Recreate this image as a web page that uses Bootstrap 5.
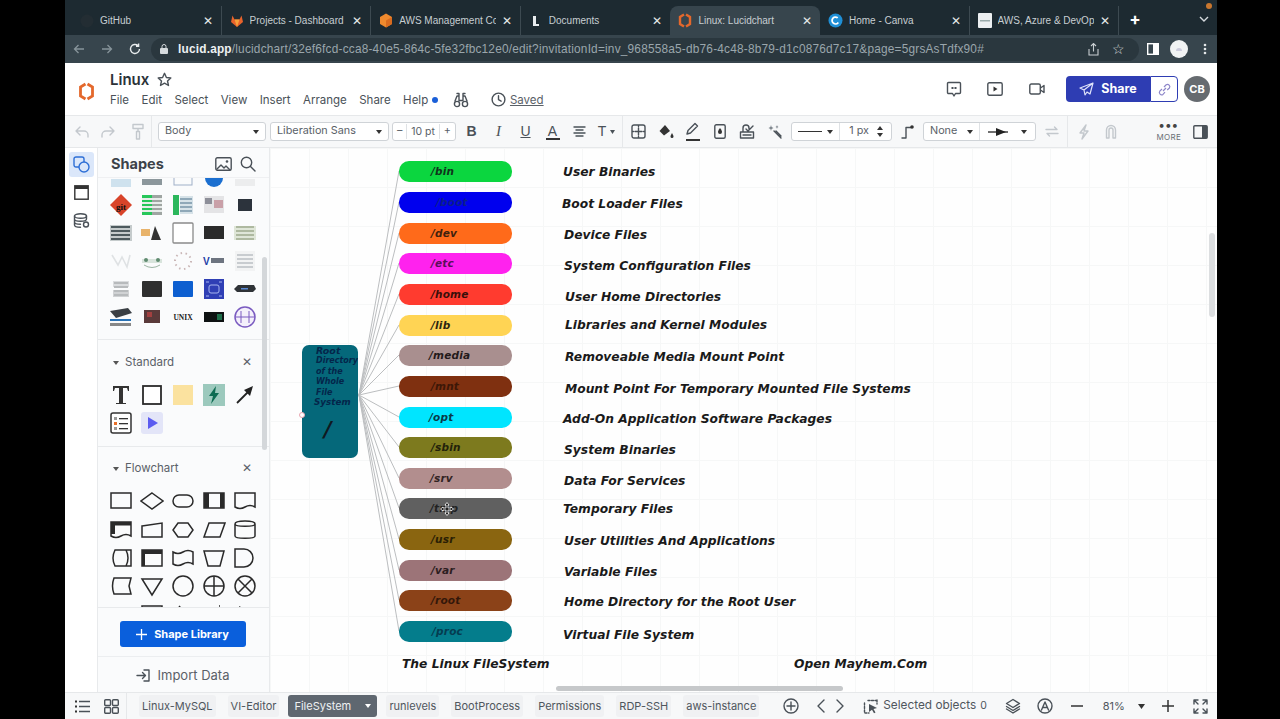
<!DOCTYPE html>
<html>
<head>
<title>Linux: Lucidchart</title>
<link href="https://cdn.jsdelivr.net/npm/bootstrap@5.3.0/dist/css/bootstrap.min.css" rel="stylesheet">
<style>
html,body{height:719px;overflow:hidden;background:#000;}
body{font-family:Inter,"Liberation Sans",sans-serif;color:#3a4048;}
.frame{width:1152px;height:719px;margin-left:65px;background:#fff;}
svg{display:block;flex:none;}
.ic{fill:none;stroke:#4a5158;stroke-width:1.4;stroke-linecap:round;stroke-linejoin:round;}
.ic-faint{stroke:#c3c8cd;}
.ml2{margin-left:2px;}.ml3{margin-left:3px;}.ml4{margin-left:4px;}.ml10{margin-left:10px;}.ml11{margin-left:11px;}.ml12{margin-left:12px;}.ml13{margin-left:13px;}.ml14{margin-left:14px;}.ml15{margin-left:15px;}.ml16{margin-left:16px;}.ml17{margin-left:17px;}.ml18{margin-left:18px;}.ml19{margin-left:19px;}.ml20{margin-left:20px;}.ml25{margin-left:25px;}.ml26{margin-left:26px;}
.arial{font-family:"Liberation Sans",sans-serif;}
/* browser */
.tabstrip{height:35px;background:#1d2a31;padding-left:7px;flex:none;}
.brtab{width:149.6px;height:29px;margin-top:6px;padding:0 8px 0 8px;color:#c7ced2;font:10px "Liberation Sans",sans-serif;border-right:1px solid #3d4a51;gap:6px;white-space:nowrap;}
.brtab.on{background:#37454d;border-radius:8px 8px 0 0;border-right:0;}
.brtab.noline{border-right:0;}
.brtab .tname{flex:1;overflow:hidden;}
.brtab .shut{color:#e6e9eb;font-size:12px;line-height:1;}
.newtab{font-size:17px;margin-left:10px;}
.orange-dot{position:absolute;right:5px;top:3px;width:6px;height:6px;border-radius:50%;background:#c9772f;}
.addr{height:28px;background:#37454d;padding:0 10px 0 8px;flex:none;}
.urlpill{width:994px;height:23px;border-radius:12px;background:#2a373e;margin-left:10px;padding-left:9px;font:11.85px "Liberation Sans",sans-serif;color:#9aa6ac;white-space:nowrap;letter-spacing:.2px;}
.urlpill b{color:#eef1f2;font-weight:700;}
.urlstar{width:40px;color:#d5dadd;font-size:14px;}
/* app header */
.apphead{height:52px;background:#fff;padding-left:14px;flex:none;}
.doc-title{font-size:15px;font-weight:600;color:#2c3238;line-height:18px;margin-right:8px;}
.menu-row{font-size:11.5px;color:#4a5158;gap:12.4px;line-height:16px;margin-top:3px;}
.saved{text-decoration:underline;color:#5a6168;}
.share-main{width:84px;height:26px;background:#2e3db3;color:#fff;font-size:12.5px;font-weight:700;border-radius:4px 0 0 4px;gap:7px;margin-left:21px;}
.share-link{width:28px;height:26px;border:1px solid #2e3db3;border-radius:0 4px 4px 0;}
.avatar{width:26px;height:26px;border-radius:50%;background:#666b70;color:#fff;font-size:11px;font-weight:700;margin:0 7px 0 6px;}
/* toolbar */
.toolrow{height:33px;background:#f7f8f9;border-top:1px solid #e6e8ea;border-bottom:1px solid #e6e8ea;padding-left:3px;flex:none;}
.tbtn{width:27px;height:100%;font-size:14px;color:#4a5158;flex:none;}
.tbtn.w25{width:25px;}
.tbtn.w29{width:29px;}
.tbtn.serif{font-family:"Liberation Serif",serif;font-size:15px;}
.tbtn.stack{line-height:14px;}
.colorbar{display:block;width:14px;height:2px;background:#333;}
.vsep{width:1px;height:100%;background:#e6e8ea;flex:none;}
.vsep.tight{margin:0 2px;}
.pick{height:19px;background:#fff;border:1px solid #cfd3d7;border-radius:3px;font-size:10.8px;color:#5a6168;padding:0 6px;white-space:nowrap;flex:none;}
.pick i{width:0;height:0;border:3.5px solid transparent;border-top:4.5px solid #333;border-bottom:0;margin-left:auto;}
.pick-body{width:108px;margin-left:6px;}
.pick-font{width:119px;margin-left:4px;}
.pick-size{width:64px;margin-left:3px;padding:0 4px;}
.pick-size .val{font-size:10.5px;padding:0 4px;border-left:1px solid #dfe2e5;border-right:1px solid #dfe2e5;}
.pick-line{width:101px;margin-left:2px;padding:0;}
.pick-line .seg{width:48px;height:100%;padding:0 6px;border-right:1px solid #dfe2e5;}
.pick-line .rule{display:block;width:24px;height:1.5px;background:#333;}
.pick-ends{width:113px;padding:0;}
.pick-ends .seg{width:56px;height:100%;padding:0 6px;border-right:1px solid #dfe2e5;}
.pick-ends .seg2{height:100%;padding:0 8px;flex-grow:1;}
.slot31{width:31px;}
.more{margin-right:12px;color:#6a7076;font-size:8px;line-height:9px;letter-spacing:.3px;}
.more b{font-size:12px;line-height:8px;color:#444;letter-spacing:1px;}
.panelicon{margin-right:9px;}
/* sidebar */
.rail{width:33px;background:#fff;padding-top:4px;border-right:1px solid #e8eaec;gap:3px;flex:none;}
.railbtn{width:25px;height:25px;border-radius:3px;}
.railbtn.on{background:#dbe7fa;}
.sidepanel{width:172px;background:#fafbfc;border-right:1px solid #e8eaec;flex:none;}
.sect-shapes{height:30px;padding:2px 13px 0;border-bottom:1px solid #eff0f2;flex:none;}
.sect-shapes span{font-size:14.5px;font-weight:700;color:#3c4249;}
.thumbs{height:162px;overflow:hidden;border-bottom:1px solid #e8eaec;flex:none;}
.cellgrid{display:grid;grid-template-columns:repeat(5,30.8px);margin-left:8px;}
.cellgrid>div{display:flex;align-items:center;justify-content:center;}
.thumbgrid{grid-auto-rows:28px;margin-top:-15px;}
.sect-head{font-size:11.5px;color:#5a6168;padding:0 17px 0 15px;height:28px;gap:6px;}
.sect-head i{width:0;height:0;border:3.2px solid transparent;border-top:4.5px solid #555;border-bottom:0;}
.sect-std{height:107px;border-bottom:1px solid #e8eaec;padding-top:9px;flex:none;}
.sect-flow{height:161px;overflow:hidden;border-bottom:1px solid #e8eaec;padding-top:8px;flex:none;}
.flowgrid{grid-auto-rows:28.4px;margin-top:4px;}
.stdgrid{grid-auto-rows:28px;margin-top:4px;}
.libbtn-wrap{height:49px;border-bottom:1px solid #eceef0;padding:4px 2px 0 0;flex:none;}
.libbtn{width:126px;height:26px;background:#0a5fdc;color:#fff;font-size:11px;font-weight:700;border:0;border-radius:3px;gap:7px;padding:0;}
.import{height:34px;font-size:13px;color:#5a6168;gap:7px;padding:3px 2px 0 0;flex:none;}
.vscroll{position:absolute;right:2px;top:109px;width:5px;height:193px;background:#d4d7da;border-radius:3px;}
/* canvas */
.board{background-color:#fefefe;background-image:linear-gradient(#f6f7f7 1px,transparent 1px),linear-gradient(90deg,#f6f7f7 1px,transparent 1px);background-size:39px 39px;overflow:hidden;}
.wires{position:absolute;left:0;top:0;}
.pillnode{position:absolute;width:113px;height:21px;border-radius:10px;font:italic 700 10.5px/21px "DejaVu Sans",sans-serif;letter-spacing:.2px;}
.caption{position:absolute;font:italic 700 12.28px/16px "DejaVu Sans",sans-serif;color:#1a1a1a;white-space:nowrap;transform:translateY(-50%);}
.rootnode{position:absolute;left:32px;top:197px;width:56px;height:113px;background:#05687a;border-radius:7px;font:italic 700 8px/10.4px "DejaVu Sans",sans-serif;color:#04264a;padding:1px 0 0 14px;overflow:hidden;white-space:nowrap;}
.rootnode .big{font-size:9.5px;}
.rootnode .sys{font-size:8.8px;line-height:9px;margin-left:-2px;}
.rootnode .slash{font-size:21px;line-height:24px;color:#101820;margin:11px 0 0 8px;}
.handle{position:absolute;left:29px;top:264px;width:6px;height:6px;border-radius:50%;background:#fff;border:1px solid #e9a5b0;}
.hbar{position:absolute;left:286px;bottom:1px;width:287px;height:5px;background:#c6c8ca;border-radius:3px;}
.vbar{position:absolute;right:2px;top:85px;width:6px;height:84px;background:#dcdee0;border-radius:3px;}
.movecursor{position:absolute;left:170px;top:354px;}
/* footer */
.pagebar{height:27px;background:#f7f8f9;border-top:1px solid #e6e8ea;font-size:11px;color:#4f565d;white-space:nowrap;flex:none;}
.pagebar .vsep{margin:0 12px 0 7px;}
.pagetab{height:22px;background:#f0f1f3;border-radius:3px;padding:0 3px;margin-right:12px;flex:none;}
.pagetab.on{background:#5f6770;color:#eef0f2;width:89px;padding:0 5px 0 6px;margin:0 9px 0 -3px;justify-content:space-between;}
.pagetab.on i{width:0;height:0;border:3.2px solid transparent;border-top:4.5px solid #fff;border-bottom:0;margin-right:1px;}
.selected-txt{font-size:11.8px;}
.count{font-size:10.5px;}
</style>
</head>
<body>
<div class="frame d-flex flex-column">

  <!-- browser tabs -->
  <div class="tabstrip d-flex position-relative">
    <div class="brtab d-flex align-items-center"><svg width="14" height="14"><circle cx="7" cy="7" r="6.5" fill="#232d33"/></svg><span class="tname">GitHub</span><span class="shut">✕</span></div>
    <div class="brtab d-flex align-items-center"><svg width="14" height="14" viewBox="0 0 14 14"><path d="M7 13 1 8 2.500 1.500 4.500 5.500h5L11.500 1.500 13 8z" fill="#e8632b"/><path d="M7 13 4.500 5.500h5z" fill="#f7a13a"/></svg><span class="tname">Projects - Dashboard</span><span class="shut">✕</span></div>
    <div class="brtab d-flex align-items-center"><svg width="14" height="15" viewBox="0 0 14 15"><path d="M7 .5 13 4v7l-6 3.500L1 11V4z" fill="#ef8a2e"/><path d="M7 7.500 13 4v7l-6 3.500z" fill="#d96b1f"/></svg><span class="tname">AWS Management Co</span><span class="shut">✕</span></div>
    <div class="brtab noline d-flex align-items-center"><svg width="14" height="14" viewBox="0 0 14 14"><path d="M4 2h3v8h3v2H4z" fill="#e8ecee"/></svg><span class="tname">Documents</span><span class="shut">✕</span></div>
    <div class="brtab on d-flex align-items-center"><svg width="14" height="15" viewBox="0 0 14 15"><path d="M6 1.500 2 4v7l4 2.500M8 1.500 12 4v7l-4 2.500" fill="none" stroke="#e4682c" stroke-width="2.400"/></svg><span class="tname">Linux: Lucidchart</span><span class="shut">✕</span></div>
    <div class="brtab d-flex align-items-center"><svg width="15" height="15" viewBox="0 0 15 15"><circle cx="7.500" cy="7.500" r="7" fill="#1f8fd6"/><circle cx="7.500" cy="7.500" r="3.400" fill="none" stroke="#fff" stroke-width="1.800" stroke-dasharray="16 5" transform="rotate(35 7.500 7.500)"/></svg><span class="tname">Home - Canva</span><span class="shut">✕</span></div>
    <div class="brtab d-flex align-items-center"><svg width="14" height="15"><rect width="14" height="15" rx="1" fill="#eceff1"/><rect x="2" y="7" width="10" height="1.500" fill="#9aa"/></svg><span class="tname">AWS, Azure &amp; DevOp</span><span class="shut">✕</span></div>
    <div class="newtab d-flex align-items-center text-white fw-bold mt-1">+</div>
    <svg class="ms-auto me-2 mt-3" width="10" height="6"><path d="M1 1l4 4 4-4" fill="none" stroke="#d5dadd" stroke-width="1.400"/></svg>
    <span class="orange-dot"></span>
  </div>

  <!-- address bar -->
  <div class="addr d-flex align-items-center">
    <svg class="me-3" width="12" height="12"><path d="M11 6H1.500M5.500 2 1.500 6l4 4" fill="none" stroke="#87949a" stroke-width="1.300"/></svg>
    <svg class="me-3" width="12" height="12"><path d="M1 6h9.500M6.500 2l4 4-4 4" fill="none" stroke="#87949a" stroke-width="1.300"/></svg>
    <svg width="12" height="12"><path d="M10.500 6a4.500 4.500 0 1 1-1.400-3.300M9.600 .6v2.600H7" fill="none" stroke="#e8ecee" stroke-width="1.400"/></svg>
    <div class="urlpill d-flex align-items-center">
      <svg class="me-2" width="8" height="10"><rect y="4" width="8" height="6" rx="1" fill="#d5dadd"/><path d="M2 4V2.500a2 2 0 0 1 4 0V4" fill="none" stroke="#d5dadd"/></svg>
      <span class="ml2"><b>lucid.app</b>/lucidchart/32ef6fcd-cca8-40e5-864c-5fe32fbc12e0/edit?invitationId=inv_968558a5-db76-4c48-8b79-d1c0876d7c17&amp;page=5grsAsTdfx90#</span>
      <svg class="ms-auto" width="11" height="13"><path d="M1 6v6h9V6M5.500 8.500V1M3 3l2.500-2.500L8 3" fill="none" stroke="#c8ced1" stroke-width="1.100"/></svg>
      <span class="urlstar text-center">☆</span>
    </div>
    <svg class="ms-2" width="12" height="12"><rect x=".7" y=".7" width="10.600" height="10.600" fill="none" stroke="#fff" stroke-width="1.400"/><rect x="6" y="1" width="5" height="10" fill="#fff"/></svg>
    <svg class="ml11" width="18" height="18"><circle cx="9" cy="9" r="9" fill="#f1f3f4"/><path d="M6 11a3 3 0 0 1 6 0z" fill="#ccd"/></svg>
    <svg class="ml15" width="4" height="12"><g fill="#e4e8ea"><circle cx="2" cy="2" r="1.300"/><circle cx="2" cy="6" r="1.300"/><circle cx="2" cy="10" r="1.300"/></g></svg>
  </div>

  <!-- app header -->
  <div class="apphead d-flex align-items-center">
    <svg width="15" height="19" viewBox="0 0 15 19" class="me-2 mt-1"><path d="M6.500 2 1.500 5v9l5 3M8.500 2l5 3v9l-5 3" fill="none" stroke="#e4682c" stroke-width="2.800"/></svg>
    <div class="ms-2">
      <div class="d-flex align-items-center"><span class="doc-title">Linux</span><svg width="15" height="15" viewBox="0 0 15 15"><path class="ic" d="M7.500 1.300 9.400 5.500l4.400.5-3.300 3 1 4.500-4-2.400-4 2.400 1-4.500-3.300-3 4.400-.5z"/></svg></div>
      <div class="d-flex align-items-center menu-row">
        <span>File</span><span>Edit</span><span>Select</span><span>View</span><span>Insert</span><span>Arrange</span><span>Share</span>
        <span class="d-flex align-items-center gap-1">Help <svg width="6" height="6"><circle cx="3" cy="3" r="3" fill="#1a5fd8"/></svg></span>
        <svg class="ml2" width="16" height="16" viewBox="0 0 16 16"><path class="ic" d="M4 1.500h2v7M10 8.500v-7h2M2 9l2-5h2v5M10 4h2l2 5M6 8.500h4"/><circle class="ic" cx="4" cy="12" r="2.600"/><circle class="ic" cx="12" cy="12" r="2.600"/></svg>
        <span class="d-flex align-items-center gap-1 ml10"><svg width="15" height="15" viewBox="0 0 15 15"><circle class="ic" cx="7.500" cy="7.500" r="6.400"/><path class="ic" d="M7.500 3.800v3.900l2.600 1.500"/></svg><span class="saved">Saved</span></span>
      </div>
    </div>
    <div class="ms-auto d-flex align-items-center">
      <svg width="16" height="17" viewBox="0 0 16 17"><path class="ic" d="M2.500 1.500h11a1 1 0 0 1 1 1v9a1 1 0 0 1-1 1H9.500L8 15l-1.500-2.500h-4a1 1 0 0 1-1-1v-9a1 1 0 0 1 1-1z"/><path d="M5.500 6h2v2h-2zM8.500 6h2v2h-2z" fill="#4a5158"/></svg>
      <svg class="ml25" width="16" height="14" viewBox="0 0 16 14"><rect class="ic" x=".8" y=".8" width="14.400" height="12.400" rx="1.500"/><path d="M6.500 4.500v5l4-2.500z" fill="#333"/></svg>
      <svg class="ml26" width="16" height="12" viewBox="0 0 16 12"><rect class="ic" x=".8" y="1" width="10.500" height="10" rx="1.500"/><path class="ic" d="M11.500 5l3.500-2.500v7L11.500 7"/></svg>
      <div class="share-main d-flex align-items-center justify-content-center"><svg width="15" height="14" viewBox="0 0 15 14"><path d="M14 1 1 6l4 2 1 5 2-3 3 2zM5 8l9-7" fill="none" stroke="#dfe3fa" stroke-width="1.200" stroke-linejoin="round"/></svg>Share</div>
      <div class="share-link d-flex align-items-center justify-content-center"><svg width="15" height="15" viewBox="0 0 15 15"><path d="M6 9l3-3M5 7 2.800 9.200a2.300 2.300 0 0 0 3.200 3.200L8 10.200M7 5l2.200-2.200a2.300 2.300 0 0 1 3.200 3.200L10.200 8" fill="none" stroke="#8d86c9" stroke-width="1.200"/></svg></div>
      <div class="avatar d-flex align-items-center justify-content-center">CB</div>
    </div>
  </div>

  <!-- format toolbar -->
  <div class="toolrow d-flex align-items-center">
    <div class="tbtn d-flex align-items-center justify-content-center"><svg width="14" height="12"><path class="ic ic-faint" d="M5 1 1 5l4 4M1 5h8a4 4 0 0 1 4 4v2"/></svg></div>
    <div class="tbtn w25 d-flex align-items-center justify-content-center"><svg width="14" height="12"><path class="ic ic-faint" d="M9 1l4 4-4 4M13 5H5a4 4 0 0 0-4 4v2"/></svg></div>
    <div class="tbtn ml4 d-flex align-items-center justify-content-center"><svg width="14" height="17"><path class="ic ic-faint" d="M2 1.500h10v4H2zM7 5.500v3M5.500 8.500h3V16h-3z"/></svg></div>
    <div class="vsep"></div>
    <div class="pick pick-body d-flex align-items-center">Body<i></i></div>
    <div class="pick pick-font d-flex align-items-center">Liberation Sans<i></i></div>
    <div class="pick pick-size d-flex align-items-center justify-content-between"><span>–</span><span class="val">10 pt</span><span>+</span></div>
    <div class="tbtn ml2 arial d-flex align-items-center justify-content-center fw-bold">B</div>
    <div class="tbtn serif d-flex align-items-center justify-content-center fst-italic">I</div>
    <div class="tbtn arial d-flex align-items-center justify-content-center text-decoration-underline">U</div>
    <div class="tbtn stack arial d-flex flex-column align-items-center justify-content-center">A<span class="colorbar"></span></div>
    <div class="tbtn d-flex align-items-center justify-content-center"><svg width="13" height="12"><path class="ic" d="M1 1h11M3 4h7M1 7h11M3 10h7"/></svg></div>
    <div class="tbtn arial d-flex align-items-center justify-content-center">T<svg class="ms-1" width="5" height="4"><path d="M0 0h5L2.500 4z" fill="#4a5158"/></svg></div>
    <div class="vsep tight"></div>
    <div class="tbtn d-flex align-items-center justify-content-center"><svg width="15" height="15"><path class="ic" d="M3 1h9a2 2 0 0 1 2 2v9a2 2 0 0 1-2 2H3a2 2 0 0 1-2-2V3a2 2 0 0 1 2-2zM7.500 4v7M4 7.500h7M1 7.500h1.500M12.500 7.500H14M7.500 1v1.500M7.500 12.500V14"/></svg></div>
    <div class="tbtn d-flex align-items-center justify-content-center"><svg width="16" height="15" viewBox="0 0 16 15"><path d="M7 1 1.500 7 6 11.500 12 7z" fill="#333"/><path d="M14 9c-1 2-1.500 2.500-1.500 3.500a1.500 1.500 0 0 0 3 0C15.500 11.500 15 11 14 9z" fill="#333"/></svg></div>
    <div class="tbtn d-flex flex-column align-items-center justify-content-center"><svg width="15" height="13"><path class="ic" d="M2 12 3 8.500 10 1.500l2.500 2.500-7 7z"/></svg><span class="colorbar mt-1"></span></div>
    <div class="tbtn d-flex align-items-center justify-content-center"><svg width="12" height="15"><rect class="ic" x=".8" y=".8" width="10.400" height="13.400" rx="1.500"/><path d="M6 4c-1.500 2-2 3-2 4a2 2 0 0 0 4 0c0-1-.5-2-2-4z" fill="#333"/></svg></div>
    <div class="tbtn d-flex align-items-center justify-content-center"><svg width="16" height="15"><path class="ic" d="M1.500 8h13v6h-13zM4 8V4a3 3 0 0 1 6 0v1M7 5l2 2 5-5M4 11h8"/></svg></div>
    <div class="tbtn w29 d-flex align-items-center justify-content-center"><svg width="16" height="16"><path class="ic" d="M7 7l7 7M9 7l5 5"/><path d="M4 1l.6 2L6.500 4 4.600 5 4 7 3.400 5 1.500 4l1.900-1zM10 1l.4 1.200L11.500 3l-1.100.6L10 5l-.4-1.400L8.500 3l1.100-.8z" fill="#7d858c"/></svg></div>
    <div class="pick pick-line d-flex align-items-center">
      <div class="seg d-flex align-items-center"><span class="rule"></span><i></i></div>
      <span class="ms-auto">1 px</span><svg class="mx-2" width="6" height="11"><path d="M3 0 6 4H0zM3 11 0 7h6z" fill="#333"/></svg>
    </div>
    <div class="slot31 d-flex justify-content-center"><svg width="13" height="15"><path class="ic" d="M1 14h4V3.500h5"/><circle cx="11" cy="3" r="1.800" fill="#333"/></svg></div>
    <div class="pick pick-ends d-flex align-items-center">
      <div class="seg d-flex align-items-center">None<i></i></div>
      <div class="seg2 d-flex align-items-center"><svg width="22" height="8"><path d="M0 4h20" stroke="#222" stroke-width="1.300"/><path d="M8 0l10 4-10 4z" fill="#222"/></svg><i></i></div>
    </div>
    <div class="slot31 d-flex justify-content-center"><svg width="14" height="11"><path class="ic ic-faint" d="M1 3.500h11M9.500 1 12 3.500M13 7.500H2M4.500 10 2 7.500"/></svg></div>
    <div class="vsep"></div>
    <div class="tbtn ml2 d-flex align-items-center justify-content-center"><svg width="12" height="16"><path class="ic ic-faint" d="M8 1 2 9h4l-2 6 6-8H6z"/></svg></div>
    <div class="tbtn d-flex align-items-center justify-content-center"><svg width="12" height="15"><path class="ic ic-faint" d="M1.500 14V6a4.500 4.500 0 0 1 9 0v8H8V6a2 2 0 0 0-4 0v8z"/></svg></div>
    <div class="more d-flex flex-column align-items-center ms-auto"><b>•••</b><span class="mt-1">MORE</span></div>
    <svg class="panelicon" width="15" height="14"><rect class="ic" x=".8" y=".8" width="13.400" height="12.400" rx="1"/><rect x="9" y="1" width="5" height="12" fill="#4a5158"/></svg>
  </div>

  <!-- workspace -->
  <div class="d-flex flex-grow-1 overflow-hidden">
    <div class="rail d-flex flex-column align-items-center">
      <div class="railbtn on d-flex align-items-center justify-content-center"><svg width="17" height="17"><rect x="1" y="1" width="10" height="10" rx="2" fill="none" stroke="#2e6fd6" stroke-width="1.400"/><circle cx="11" cy="11" r="5" fill="#dbe7fa" stroke="#2e6fd6" stroke-width="1.400"/></svg></div>
      <div class="railbtn d-flex align-items-center justify-content-center"><svg width="15" height="15"><rect x=".8" y=".8" width="13.400" height="13.400" fill="none" stroke="#333" stroke-width="1.400"/><rect x="1" y="1" width="13" height="3" fill="#333"/></svg></div>
      <div class="railbtn d-flex align-items-center justify-content-center"><svg width="17" height="15"><ellipse class="ic" cx="7.500" cy="3" rx="6" ry="2.300"/><path class="ic" d="M1.500 3v9c0 1.300 2.700 2.300 6 2.300M1.500 6c0 1.300 2.700 2.300 6 2.300s6-1 6-2.300V3M1.500 9c0 1.300 2.700 2.300 6 2.300"/><circle class="ic" cx="13" cy="11.500" r="2.500"/></svg></div>
    </div>

    <div class="sidepanel d-flex flex-column position-relative">
      <div class="sect-shapes d-flex align-items-center">
        <span>Shapes</span>
        <svg class="ms-auto" width="17" height="14"><rect class="ic" x=".8" y=".8" width="15.400" height="12.400" rx="1.500"/><path class="ic" d="M2 12l4-4 3 3 2-2 4 4"/><circle cx="12" cy="4.500" r="1.300" fill="#4a5158"/></svg>
        <svg class="ms-2" width="16" height="16"><circle class="ic" cx="6.500" cy="6.500" r="5.200"/><path class="ic" d="M10.500 10.500 15 15"/></svg>
      </div>
      <div class="thumbs"><div id="thumbGrid" class="cellgrid thumbgrid"></div></div>
      <div class="sect-std">
        <div class="sect-head d-flex align-items-center"><i></i><span>Standard</span><span class="ms-auto">✕</span></div>
        <div id="stdGrid" class="cellgrid stdgrid"></div>
      </div>
      <div class="sect-flow">
        <div class="sect-head d-flex align-items-center"><i></i><span>Flowchart</span><span class="ms-auto">✕</span></div>
        <div id="flowGrid" class="cellgrid flowgrid"></div>
      </div>
      <div class="libbtn-wrap d-flex align-items-center justify-content-center">
        <button class="libbtn d-flex align-items-center justify-content-center"><svg width="11" height="11"><path d="M5.500 0v11M0 5.500h11" stroke="#fff" stroke-width="1.300"/></svg>Shape Library</button>
      </div>
      <div class="import d-flex align-items-center justify-content-center"><svg width="15" height="13"><path class="ic" d="M1 6.500h8M6.500 3.500l3 3-3 3M8 1h5v11H8"/></svg>Import Data</div>
      <div class="vscroll"></div>
    </div>

    <div id="board" class="board flex-grow-1 position-relative">
      <svg id="wires" class="wires" width="140" height="544"></svg>
      <div class="rootnode">
        <div class="big">Root</div>
        <div>Directory</div>
        <div>of the</div>
        <div>Whole</div>
        <div>File</div>
        <div class="sys">System</div>
        <div class="slash">/</div>
      </div>
      <span class="handle"></span>
      <div class="hbar"></div>
      <div class="vbar"></div>
      <!-- move cursor over /tmp -->
      <svg class="movecursor" width="14" height="14" viewBox="0 0 14 14"><path d="M7 .5 9 3H8v3h3V5l2.500 2L11 9V8H8v3h1l-2 2.500L5 11h1V8H3v1L.5 7 3 5v1h3V3H5z" fill="#222" stroke="#fff" stroke-width=".8"/></svg>
    </div>
  </div>

  <!-- page tabs -->
  <div class="pagebar d-flex align-items-center">
    <svg class="ml10" width="15" height="13"><path d="M4 1.500h11M4 6.500h11M4 11.500h11" stroke="#4a5158" stroke-width="1.300"/><path d="M0 .5h2v2H0zM0 5.500h2v2H0zM0 10.500h2v2H0z" fill="#333"/></svg>
    <svg class="ml14" width="15" height="15"><g class="ic"><rect x=".7" y=".7" width="5.800" height="5.800" rx="1"/><rect x="8.500" y=".7" width="5.800" height="5.800" rx="1"/><rect x=".7" y="8.500" width="5.800" height="5.800" rx="1"/><rect x="8.500" y="8.500" width="5.800" height="5.800" rx="1"/></g></svg>
    <div class="vsep"></div>
    <div class="pagetab d-flex align-items-center">Linux-MySQL</div>
    <div class="pagetab d-flex align-items-center">VI-Editor</div>
    <div class="pagetab on d-flex align-items-center"><span>FileSystem</span><i></i></div>
    <div class="pagetab d-flex align-items-center">runlevels</div>
    <div class="pagetab d-flex align-items-center">BootProcess</div>
    <div class="pagetab d-flex align-items-center">Permissions</div>
    <div class="pagetab d-flex align-items-center">RDP-SSH</div>
    <div class="pagetab d-flex align-items-center">aws-instance</div>
    <svg class="ml12" width="16" height="16"><circle class="ic" cx="8" cy="8" r="7"/><path class="ic" d="M8 4v8M4 8h8"/></svg>
    <svg class="ml18" width="8" height="14"><path class="ic" d="M7 1 1 7l6 6"/></svg>
    <svg class="ml11" width="8" height="14"><path class="ic" d="M1 1l6 6-6 6"/></svg>
    <svg class="ml19" width="16" height="15"><path class="ic" d="M5 1.500h9M1.500 4v10H6M14 1v4" stroke-dasharray="2 1.500"/><path d="M6 5l8 4-3.500 1 2 3.500-1.500.8-2-3.500L6 13z" fill="#4a5158"/></svg>
    <span class="selected-txt ms-1">Selected objects</span>
    <span class="count ml4">0</span>
    <svg class="ml18" width="16" height="16"><path class="ic" d="M8 1.500l6.500 4L8 9.500l-6.500-4zM1.500 8.500 8 12.500l6.500-4M1.500 11 8 15l6.500-4"/></svg>
    <svg class="ml16" width="16" height="16"><circle class="ic" cx="8" cy="8" r="7"/><path class="ic" d="M4.500 12 8 4l3.500 8M5.800 9.500h4.400"/></svg>
    <svg class="ml18" width="12" height="2"><path d="M0 1h12" stroke="#333" stroke-width="1.500"/></svg>
    <span class="ml20">81%</span>
    <svg class="ml13" width="7" height="5"><path d="M0 0h7L3.500 5z" fill="#333"/></svg>
    <svg class="ml17" width="12" height="12"><path d="M6 0v12M0 6h12" stroke="#333" stroke-width="1.500"/></svg>
    <svg class="ml19" width="15" height="15"><path class="ic" d="M1 5V1h4M10 1h4v4M1 10v4h4M14 10v4h-4M1 1l4 4M14 1l-4 4M1 14l4-4M14 14l-4-4"/></svg>
  </div>
</div>

<script>
// nodes of the diagram, [path, colour, y centre, text offset, text colour]
const dirs = [
  ["/bin","#0bd63f",23,32,"#10331c"],["/boot","#0000ee",54,37,"#0a1f8c"],["/dev","#ff6a1a",85,32,"#40210e"],
  ["/etc","#ff22ee",115,32,"#5c0f5a"],["/home","#ff3b2f",146,32,"#3a0f0a"],["/lib","#ffd454",177,32,"#2b2510"],
  ["/media","#a98f8f",207,30,"#241a1a"],["/mnt","#7f3010",238,32,"#3c1707"],["/opt","#00e5ff",269,30,"#093a48"],
  ["/sbin","#7d7a1e",299,32,"#23220a"],["/srv","#b28e8e",330,31,"#332424"],["/tmp","#606060",360,31,"#222"],
  ["/usr","#8a6510",391,32,"#2a1f05"],["/var","#9c7478",422,32,"#2c1d1f"],["/root","#8b4218",452,32,"#33170a"],
  ["/proc","#047d8c",483,33,"#053c50"]
];
const notes = [
  ["User Binaries",293,24],["Boot Loader Files",292,56],["Device Files",294,87],["System Configuration Files",294,118],
  ["User Home Directories",295,149],["Libraries and Kernel Modules",295,177],["Removeable Media Mount Point",295,209],
  ["Mount Point For Temporary Mounted File Systems",295,241],["Add-On Application Software Packages",293,271],
  ["System Binaries",294,302],["Data For Services",294,333],["Temporary Files",293,361],
  ["User Utilities And Applications",294,393],["Variable Files",294,424],["Home Directory for the Root User",294,454],
  ["Virtual File System",293,487],["The Linux FileSystem",132,516],["Open Mayhem.Com",524,516]
];
const board = document.getElementById("board");
const wires = document.getElementById("wires");
let wireHtml = "";
dirs.forEach(d => {
  wireHtml += `<path d="M89 247 129 ${d[2]}" stroke="#bcbec0" stroke-width="1"/>`;
  const el = document.createElement("div");
  el.className = "pillnode";
  el.style.cssText = `left:129px;top:${d[2]-10.5}px;background:${d[1]};color:${d[4]};padding-left:${d[3]}px`;
  el.textContent = d[0];
  board.insertBefore(el, board.querySelector(".rootnode"));
});
wires.innerHTML = wireHtml;
notes.forEach(n => {
  const el = document.createElement("div");
  el.className = "caption";
  el.style.cssText = `left:${n[1]}px;top:${n[2]}px`;
  el.textContent = n[0];
  board.appendChild(el);
});

// palette thumbnails
const r = (x,y,w,h,f,extra="") => `<rect x="${x}" y="${y}" width="${w}" height="${h}" fill="${f}" ${extra}/>`;
const thumb = s => `<div><svg width="24" height="24" viewBox="0 0 24 24">${s}</svg></div>`;
const lines = (c,x=2,w=20) => [5,9,13,17].map(y=>r(x,y,w,2,c)).join("");
document.getElementById("thumbGrid").innerHTML = [
  r(2,14,20,8,"#cfe2ee"), r(2,14,20,6,"#8c979c"), r(3,12,18,8,"none",'stroke="#9fb0c8"'), `<circle cx="12" cy="13" r="9" fill="#1b6fd0"/>`, r(2,14,20,7,"#ecedee"),
  `<path d="M12 1 23 12 12 23 1 12z" fill="#d8442a"/><text x="12" y="17" font-size="9" font-weight="700" font-family="Liberation Serif" text-anchor="middle" fill="#111">git</text>`,
  r(2,2,10,20,"#27c75a")+r(12,2,10,20,"#9fa5a2")+lines("#e8ecea"),
  r(2,2,6,20,"#2bb75c")+r(9,3,13,18,"#d6e2e8")+lines("#8fa8b8",9,12),
  r(2,3,20,17,"#e4e4e6")+r(3,5,7,6,"#8d8f99")+r(12,7,9,8,"#c9a0a8"),
  r(5,6,14,12,"#2c333c"),
  r(1,4,22,16,"#c5cbcc")+lines("#4d5a5e",2,19),
  r(1,8,9,7,"#e8b36b")+`<path d="M15 5 11 19h10z" fill="#333"/>`,
  r(2,2,20,20,"#fff",'stroke="#8a8a8a" stroke-width="1.300" rx="1"'),
  r(2,5,20,13,"#2b2b2b"),
  r(1,5,22,14,"#dfe6d8")+lines("#aeb9a0",3,18),
  `<path d="M3 6l6 10 4-8 5 10 3-12" fill="none" stroke="#dfe2e4" stroke-width="1.600"/>`,
  r(2,10,20,4,"#d8e4dc")+`<circle cx="6" cy="11" r="2" fill="#5f8b70"/><circle cx="18" cy="11" r="2" fill="#5f8b70"/><path d="M4 16q8 5 16 0" stroke="#9db5a5" fill="none"/>`,
  `<circle cx="12" cy="12" r="8" fill="none" stroke="#c9b6b6" stroke-dasharray="1.500 3.500" stroke-width="2"/>`,
  `<text x="1" y="16" font-size="10" font-weight="700" font-family="Liberation Sans" fill="#1f3fa8">V</text>`+r(9,9,13,5,"#6d7480"),
  r(2,2,20,20,"#f2f3f4")+lines("#c8ccd0",4,16),
  r(4,4,16,6,"#dadcde")+r(4,13,16,7,"#d0d2d4")+lines("#b7babc",5,14),
  r(2,4,20,16,"#2f2f2f",'rx="1"'),
  r(2,4,20,16,"#0d5fd0",'rx="1"'),
  r(2,2,20,20,"#2f3fb5")+`<rect x="7" y="8" width="10" height="8" rx="2" fill="none" stroke="#a7b5ef"/><path d="M4 5h3M17 5h3M4 19h3M17 19h3" stroke="#a7b5ef"/>`,
  `<path d="M1 12 5 8h16l2 4-3 3H4z" fill="#2f3337"/>`+r(8,11,7,1.500,"#5b8ad6"),
  `<path d="M1 6l18-3 4 5-16 5z" fill="#3a3f44"/>`+r(1,14,21,2,"#2a72b5")+r(1,18,21,3,"#888"),
  r(4,5,16,13,"#5a3a3a")+r(7,7,5,5,"#a24040"),
  `<text x="12" y="15" font-size="7.500" font-family="Liberation Serif" font-weight="700" text-anchor="middle" fill="#222">UNIX</text>`,
  r(2,7,20,10,"#0e1212")+r(15,9,5,6,"#1f6e4a"),
  `<circle cx="12" cy="12" r="10" fill="#f4f0fb" stroke="#7a5bc0" stroke-width="1.500"/><path d="M2 12h20M8 6v12M16 6v12" stroke="#7a5bc0"/>`
].map(thumb).join("");

// standard shapes
const shape = (s,w=24,h=24) => `<div><svg width="${w}" height="${h}" viewBox="0 0 ${w} ${h}">${s}</svg></div>`;
document.getElementById("stdGrid").innerHTML = [
  `<path d="M4 3h16v5h-1l-1-3h-4v15h3v1H7v-1h3V5H6L5 8H4z" fill="#333"/>`,
  r(3,3,18,18,"#fff",'stroke="#2a2a2a" stroke-width="1.800"'),
  r(2,2,20,20,"#fbe29f"),
  r(1,1,22,22,"#9cc9bd")+`<path d="M14 3 7 13h4l-2 8 8-11h-4z" fill="#0d6b52"/>`,
  `<path d="M4 20 17 7" stroke="#222" stroke-width="1.800"/><path d="M20 3 11 7l6 6z" fill="#222"/>`,
  r(2,2,20,20,"#fff",'stroke="#333" stroke-width="1.500" rx="2"')+r(5,6,3,3,"#999")+r(5,11,3,3,"#e8702a")+r(5,16,3,3,"#999")+r(10,7,9,1.300,"#333")+r(10,12,9,1.300,"#333")+r(10,17,9,1.300,"#333"),
  r(1,1,22,22,"#e3e5f8",'rx="3"')+`<path d="M8 6l10 6-10 6z" fill="#5b5bf0"/>`
].map(s => shape(s)).join("");

// flowchart shapes
const st = 'fill="none" stroke="#2a2a2a" stroke-width="1.500"';
document.getElementById("flowGrid").innerHTML = [
  `<rect x="2" y="4" width="20" height="15" ${st}/>`,
  `<path d="M12 4 23 12 12 20 1 12z" ${st}/>`,
  `<rect x="2" y="6" width="20" height="12" rx="6" ${st}/>`,
  `<rect x="2" y="4" width="20" height="15" ${st}/><rect x="2" y="4" width="5" height="15" fill="#2a2a2a"/><rect x="18" y="4" width="4" height="15" fill="#2a2a2a"/>`,
  `<path d="M2 4h20v14q-5-3-10 0t-10 0z" ${st}/>`,
  `<path d="M2 4h20v14q-5-3-10 0t-10 0z" ${st}/><rect x="2" y="4" width="20" height="3.500" fill="#2a2a2a"/><rect x="2" y="4" width="4" height="12" fill="#2a2a2a"/>`,
  `<path d="M2 8 22 5v14H2z" ${st}/>`,
  `<path d="M7 5h10l5 7-5 7H7l-5-7z" ${st}/>`,
  `<path d="M7 5h16l-5 14H2z" ${st}/>`,
  `<path d="M2 6c0-4 20-4 20 0v12c0 3-20 3-20 0zM2 6c0 3 20 3 20 0" ${st}/>`,
  `<path d="M6 4h16v16H6q-4-8 0-16zM17 4q4 8 0 16" ${st}/>`,
  `<rect x="2" y="4" width="20" height="16" ${st}/><rect x="2" y="4" width="20" height="4" fill="#2a2a2a"/><rect x="2" y="4" width="3" height="16" fill="#2a2a2a"/>`,
  `<path d="M2 6q5 3 10 0t10 0v12q-5-3-10 0t-10 0z" ${st}/>`,
  `<path d="M2 5h20l-4 15H6z" ${st}/>`,
  `<path d="M2 3h9a9 9 0 0 1 0 18H2z" ${st}/>`,
  `<path d="M5 4h17l-2 8 2 8H5q-3-8 0-16z" ${st}/>`,
  `<path d="M2 5h20L12 21z" ${st}/>`,
  `<circle cx="12" cy="12" r="10" ${st}/>`,
  `<circle cx="12" cy="12" r="10" ${st}/><path d="M12 2v20M2 12h20" ${st}/>`,
  `<circle cx="12" cy="12" r="10" ${st}/><path d="M5 5l14 14M19 5 5 19" ${st}/>`,
  `<path d="M3 8 V5h18v3" ${st}/>`,
  `<rect x="2" y="3" width="20" height="18" ${st}/>`,
  `<path d="M8 3q4 4 4 9" ${st}/>`,
  `<path d="M18 3H17" ${st}/>`,
  `<path d="M6 4q2 0 2 3M20 4v3" ${st}/>`
].map(s => shape(s)).join("");
</script>
</body>
</html>
